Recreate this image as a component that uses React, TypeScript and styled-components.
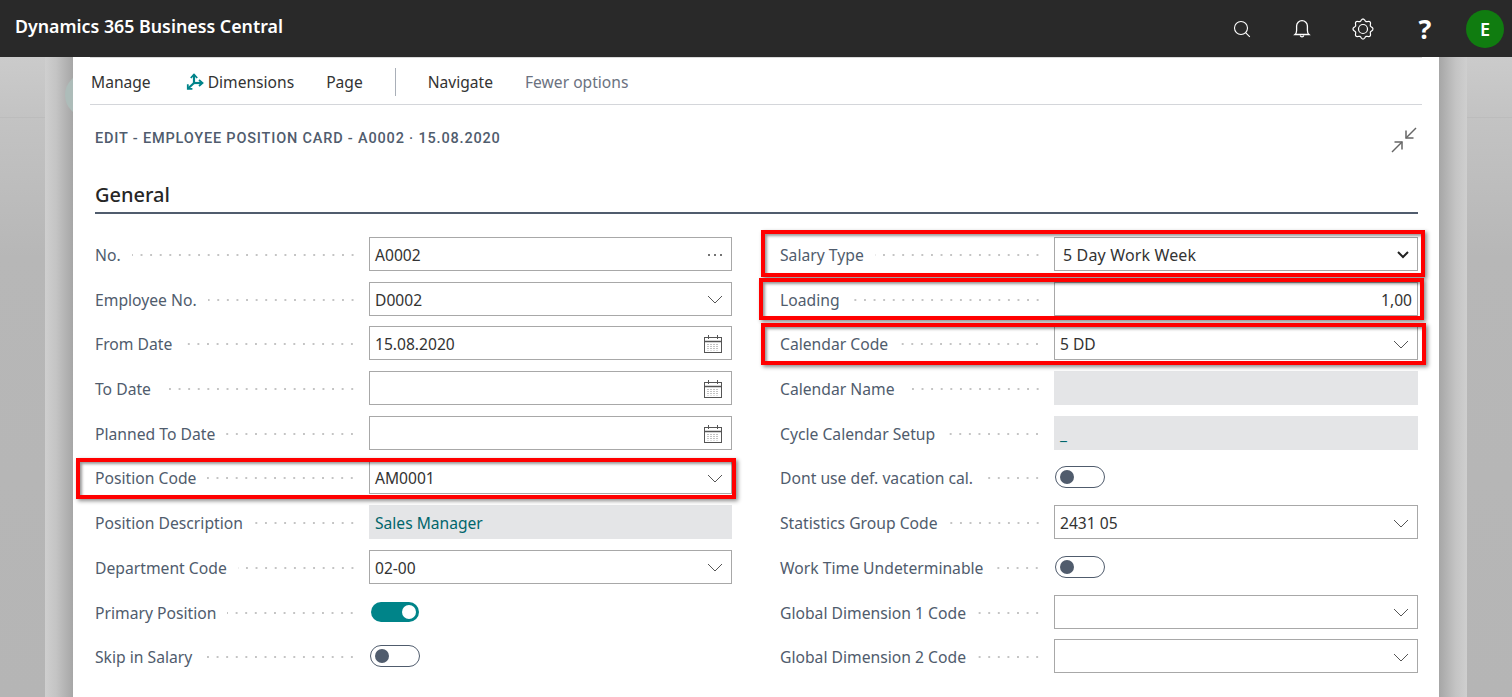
import React from 'react';
import styled, {createGlobalStyle} from 'styled-components';

const GlobalStyle = createGlobalStyle`
  html, body {
    margin: 0;
    padding: 0;
    background: #c6c6c6;
    font-family: 'Noto Sans', 'Open Sans', sans-serif;
  }
`;

const Page = styled.div`
  display: flex;
  flex-direction: column;
  height: 100vh;
  overflow: hidden;
`;

const TopBar = styled.header`
  flex: 0 0 57px;
  display: flex;
  align-items: center;
  background: #292929;
  color: #fff;
  padding: 0 8px 0 15px;
`;

const Brand = styled.div`
  flex: 1;
  font-size: 17.8px;
  font-weight: 600;
  margin-top: -6px;
`;

const TopIcon = styled.div<{$width: number}>`
  width: ${(p) => p.$width}px;
  display: flex;
  justify-content: center;
  align-items: center;
  color: #fff;
`;

const HelpMark = styled.span`
  font-family: 'Open Sans', sans-serif;
  font-size: 27px;
  font-weight: 700;
  line-height: 1;
`;

const Avatar = styled.div`
  width: 38px;
  height: 38px;
  margin-left: 10px;
  border-radius: 50%;
  background: #107c10;
  display: flex;
  align-items: center;
  justify-content: center;
  font-size: 18px;
  font-weight: 600;
`;

const Stage = styled.div`
  flex: 1;
  display: flex;
  min-height: 0;
`;

const Gutter = styled.div<{$grow?: boolean}>`
  width: 45px;
  flex: ${(p) => (p.$grow ? 1 : '0 0 45px')};
  background: linear-gradient(#cbcbcb, #c3c3c3 60px, #b7b7b7 200px, #b5b5b5);
  display: flex;
  flex-direction: column;
`;

const GutterHead = styled.div`
  height: 60px;
  border-bottom: 1px solid #bcbcbc;
`;

const ShadowStrip = styled.div<{$side: 'left' | 'right'}>`
  position: relative;
  flex: 0 0 28px;
  overflow: hidden;
  background: linear-gradient(
    to ${(p) => p.$side},
    #a6a6a6,
    #c4c4c4 60%,
    #cfcfcf
  );
`;

const BackdropCircle = styled.div`
  position: absolute;
  left: 20px;
  top: 16px;
  width: 44px;
  height: 44px;
  border-radius: 50%;
  background: #adbcb9;
`;

const Modal = styled.main`
  flex: 0 0 1366px;
  background: #fff;
  padding: 0 17px;
  box-sizing: border-box;
`;

const ActionBar = styled.nav`
  height: 48px;
  box-sizing: border-box;
  display: flex;
  align-items: center;
  gap: 32px;
  border-top: 1px solid #d9d9d9;
  border-bottom: 1px solid #d4d6da;
  padding: 1px 0 0 1px;
  font-size: 15.6px;
  color: #333;
`;

const ActionItem = styled.span<{$muted?: boolean}>`
  display: inline-flex;
  align-items: center;
  gap: 4px;
  color: ${(p) => (p.$muted ? '#6b7280' : '#333')};
  & > svg {
    margin-left: 3px;
  }
`;

const ActionDivider = styled.span`
  width: 1px;
  height: 28px;
  background: #a9afb8;
`;

const Body = styled.div`
  padding: 0 4px 0 5px;
`;

const TitleRow = styled.div`
  height: 67px;
  display: flex;
  align-items: flex-start;
  justify-content: space-between;
`;

const CardTitle = styled.h1`
  margin: 25px 0 0;
  font-family: 'Roboto', sans-serif;
  font-size: 14.5px;
  font-weight: 500;
  letter-spacing: 0.82px;
  color: #505c6d;
`;

const Collapse = styled.div`
  margin: 22px 1px 0 0;
  color: #666;
  line-height: 0;
`;

const SectionTitle = styled.h2`
  margin: 0 0 23px;
  height: 42px;
  box-sizing: border-box;
  padding-top: 9px;
  border-bottom: 2px solid #505c6d;
  font-size: 20px;
  font-weight: 500;
  line-height: 28px;
  color: #262626;
`;

const FormGrid = styled.div`
  display: grid;
  grid-template-columns: 637px 638px;
  column-gap: 48px;
`;

const FieldColumn = styled.div`
  display: grid;
  grid-auto-rows: 34px;
  row-gap: 10.7px;
`;

const Row = styled.div`
  position: relative;
  display: grid;
  grid-template-columns: 274px 1fr;
  align-items: center;
`;

const Label = styled.div`
  display: flex;
  align-items: center;
  padding: 2px 12px 0 0;
  font-size: 15.7px;
  color: #505c6d;
  white-space: nowrap;
`;

const Dots = styled.span`
  flex: 1;
  height: 2px;
  margin-left: 11px;
  background-image: radial-gradient(circle, #c4c4c4 1px, transparent 1.1px);
  background-size: 9.6px 2px;
  background-position: right center;
`;

const Input = styled.div<{$align?: 'right'; $pad?: number; $wide?: boolean}>`
  height: 34px;
  box-sizing: border-box;
  display: flex;
  align-items: center;
  justify-content: space-between;
  padding: 2px ${(p) => (p.$align ? 5 : 8)}px 0 ${(p) => p.$pad ?? 5}px;
  background: #fff;
  border: 1px solid #a8a8a8;
  font-size: ${(p) => (p.$wide ? 16 : 15.6)}px;
  letter-spacing: ${(p) => (p.$wide ? 0.15 : 0)}px;
  color: #333;
  ${(p) => p.$align && 'justify-content: flex-end;'}
`;

const ReadOnly = styled.div`
  height: 34px;
  box-sizing: border-box;
  display: flex;
  align-items: center;
  padding: 2px 6px 0;
  background: #e4e5e7;
  font-size: 15.6px;
  color: #00666b;
`;

const Toggle = styled.div<{$on?: boolean}>`
  width: ${(p) => (p.$on ? 48 : 50)}px;
  height: ${(p) => (p.$on ? 20 : 22)}px;
  margin-left: ${(p) => (p.$on ? 2 : 1)}px;
  box-sizing: border-box;
  border-radius: 11px;
  display: flex;
  align-items: center;
  justify-content: ${(p) => (p.$on ? 'flex-end' : 'flex-start')};
  padding: 0 3px 0 4px;
  background: ${(p) => (p.$on ? '#008489' : '#fff')};
  border: ${(p) => (p.$on ? 'none' : '1px solid #505c6d')};
`;

const Knob = styled.span<{$on?: boolean}>`
  width: 14px;
  height: 14px;
  border-radius: 50%;
  background: ${(p) => (p.$on ? '#fff' : '#505c6d')};
`;

const Highlight = styled.div<{$inset: string}>`
  position: absolute;
  inset: ${(p) => p.$inset};
  border: 4px solid #f00;
  box-shadow: 2px 2px 4px rgba(0, 0, 0, 0.45), inset 2px 2px 3px rgba(0, 0, 0, 0.4);
  pointer-events: none;
  z-index: 2;
`;

const SearchIcon = () => (
  <svg width="18" height="18" viewBox="0 0 18 18" fill="none" stroke="currentColor" strokeWidth="1.1">
    <circle cx="8" cy="8" r="6.500" />
    <path d="M12.600 12.600L16.800 16.800" />
  </svg>
);

const BellIcon = () => (
  <svg width="18" height="20" viewBox="0 0 18 20" fill="none" stroke="currentColor" strokeWidth="1.3">
    <path d="M2 15.5c1.2-1 1.6-2 1.6-4V7a5.4 5.4 0 0 1 10.8 0v4.500c0 2 .4 3 1.600 4z" />
    <path d="M7.200 16.500a1.900 1.900 0 0 0 3.600 0" />
  </svg>
);

// wavy outer ring of the settings gear, eight soft lobes
const gearPath = Array.from({length: 97}, (_, i) => {
  const angle = (i / 96) * Math.PI * 2;
  const radius = 9 + 1 * Math.cos(angle * 8);
  const x = 11 + radius * Math.cos(angle);
  const y = 11 + radius * Math.sin(angle);
  return `${i === 0 ? 'M' : 'L'}${x.toFixed(2)} ${y.toFixed(2)}`;
}).join('');

const GearIcon = () => (
  <svg width="22" height="22" viewBox="0 0 22 22" fill="none" stroke="currentColor" strokeWidth="1.2">
    <path d={gearPath} />
    <circle cx="11" cy="11" r="4.500" />
  </svg>
);

const DimensionsIcon = () => (
  <svg width="18" height="18" viewBox="0 0 18 18" fill="none" stroke="#00848a" strokeWidth="2.200">
    <path d="M8 1.500v9" />
    <path d="M4.800 5L8 1.500 11.200 5" strokeWidth="1.800" />
    <path d="M8 10l-6 5.500" />
    <path d="M1.800 11.200v4.600h4.600" strokeWidth="1.800" />
    <path d="M8 10h8" />
    <path d="M13 7l3.500 3-3.500 3" strokeWidth="1.800" />
  </svg>
);

const CollapseIcon = () => (
  <svg width="26" height="26" viewBox="0 0 26 26" fill="none" stroke="currentColor" strokeWidth="1.500">
    <path d="M25 1L15 11" />
    <path d="M15 3.500V11h7.500" />
    <path d="M1 25l10-10" />
    <path d="M3.500 15H11v7.500" />
  </svg>
);

const Chevron = () => (
  <svg width="16" height="9" viewBox="0 0 16 9" fill="none" stroke="#555" strokeWidth="1">
    <path d="M1 1l7 7 7-7" />
  </svg>
);

const BoldChevron = () => (
  <svg width="12" height="8" viewBox="0 0 12 8" fill="none" stroke="#222" strokeWidth="2">
    <path d="M1 1l5 5 5-5" />
  </svg>
);

const CalendarIcon = () => (
  <svg width="20" height="20" viewBox="0 0 20 20" fill="none" stroke="#555" strokeWidth="1">
    <rect x="1.500" y="3.500" width="17" height="15" />
    <path d="M1.500 7.500h17" strokeWidth="1.500" />
    <path d="M5.500 1v4M14.500 1v4" />
    <path d="M5 10v6.500M8 10v6.500M11 10v6.500M14 10v6.500" stroke="#888" strokeDasharray="1 1" />
  </svg>
);

const Ellipsis = () => (
  <svg width="16" height="4" viewBox="0 0 16 4" fill="#444">
    <circle cx="2" cy="2" r="1" />
    <circle cx="8" cy="2" r="1" />
    <circle cx="14" cy="2" r="1" />
  </svg>
);

type Field = {
  label: string;
  kind: 'lookup' | 'date' | 'more' | 'select' | 'number' | 'readonly' | 'toggle';
  value?: string;
  on?: boolean;
  mark?: string;
  pad?: number;
};

const leftFields: Field[] = [
  {label: 'No.', kind: 'more', value: 'A0002'},
  {label: 'Employee No.', kind: 'lookup', value: 'D0002'},
  {label: 'From Date', kind: 'date', value: '15.08.2020'},
  {label: 'To Date', kind: 'date'},
  {label: 'Planned To Date', kind: 'date'},
  {label: 'Position Code', kind: 'lookup', value: 'AM0001', mark: '-2px -4px -5px -19px'},
  {label: 'Position Description', kind: 'readonly', value: 'Sales Manager'},
  {label: 'Department Code', kind: 'lookup', value: '02-00'},
  {label: 'Primary Position', kind: 'toggle', on: true},
  {label: 'Skip in Salary', kind: 'toggle'},
];

const rightFields: Field[] = [
  {label: 'Salary Type', kind: 'select', value: '5 Day Work Week', mark: '-7px -7px -6px -19px', pad: 8},
  {label: 'Loading', kind: 'number', value: '1,00', mark: '-4px -6px -4px -21px'},
  {label: 'Calendar Code', kind: 'lookup', value: '5 DD', mark: '-3px -8px -5px -19px'},
  {label: 'Calendar Name', kind: 'readonly'},
  {label: 'Cycle Calendar Setup', kind: 'readonly', value: '_'},
  {label: 'Dont use def. vacation cal.', kind: 'toggle'},
  {label: 'Statistics Group Code', kind: 'lookup', value: '2431 05'},
  {label: 'Work Time Undeterminable', kind: 'toggle'},
  {label: 'Global Dimension 1 Code', kind: 'lookup'},
  {label: 'Global Dimension 2 Code', kind: 'lookup'},
];

const FieldValue: React.FC<{field: Field}> = ({field}) => {
  const {kind, value, on, pad} = field;
  if (kind === 'toggle') {
    return (
      <Toggle $on={on}>
        <Knob $on={on} />
      </Toggle>
    );
  }
  if (kind === 'readonly') return <ReadOnly>{value}</ReadOnly>;
  if (kind === 'number') return <Input $align="right">{value}</Input>;
  return (
    <Input $pad={pad} $wide={kind === 'select'}>
      <span>{value}</span>
      {kind === 'lookup' && <Chevron />}
      {kind === 'date' && <CalendarIcon />}
      {kind === 'more' && <Ellipsis />}
      {kind === 'select' && <BoldChevron />}
    </Input>
  );
};

const Fields: React.FC<{fields: Field[]}> = ({fields}) => (
  <FieldColumn>
    {fields.map((field) => (
      <Row key={field.label}>
        <Label>
          {field.label}
          <Dots />
        </Label>
        <FieldValue field={field} />
        {field.mark && <Highlight $inset={field.mark} />}
      </Row>
    ))}
  </FieldColumn>
);

const App: React.FC = () => (
  <Page>
    <GlobalStyle />
    <TopBar>
      <Brand>Dynamics 365 Business Central</Brand>
      <TopIcon $width={60}>
        <SearchIcon />
      </TopIcon>
      <TopIcon $width={60}>
        <BellIcon />
      </TopIcon>
      <TopIcon $width={62}>
        <GearIcon />
      </TopIcon>
      <TopIcon $width={62}>
        <HelpMark>?</HelpMark>
      </TopIcon>
      <Avatar>E</Avatar>
    </TopBar>
    <Stage>
      <Gutter>
        <GutterHead />
      </Gutter>
      <ShadowStrip $side="left">
        <BackdropCircle />
      </ShadowStrip>
      <Modal>
        <ActionBar>
          <ActionItem>Manage</ActionItem>
          <ActionItem>
            <DimensionsIcon />
            Dimensions
          </ActionItem>
          <ActionItem>Page</ActionItem>
          <ActionDivider />
          <ActionItem>Navigate</ActionItem>
          <ActionItem $muted>Fewer options</ActionItem>
        </ActionBar>
        <Body>
          <TitleRow>
            <CardTitle>EDIT - EMPLOYEE POSITION CARD - A0002 · 15.08.2020</CardTitle>
            <Collapse>
              <CollapseIcon />
            </Collapse>
          </TitleRow>
          <SectionTitle>General</SectionTitle>
          <FormGrid>
            <Fields fields={leftFields} />
            <Fields fields={rightFields} />
          </FormGrid>
        </Body>
      </Modal>
      <ShadowStrip $side="right" />
      <Gutter $grow>
        <GutterHead />
      </Gutter>
    </Stage>
  </Page>
);

export default App;
